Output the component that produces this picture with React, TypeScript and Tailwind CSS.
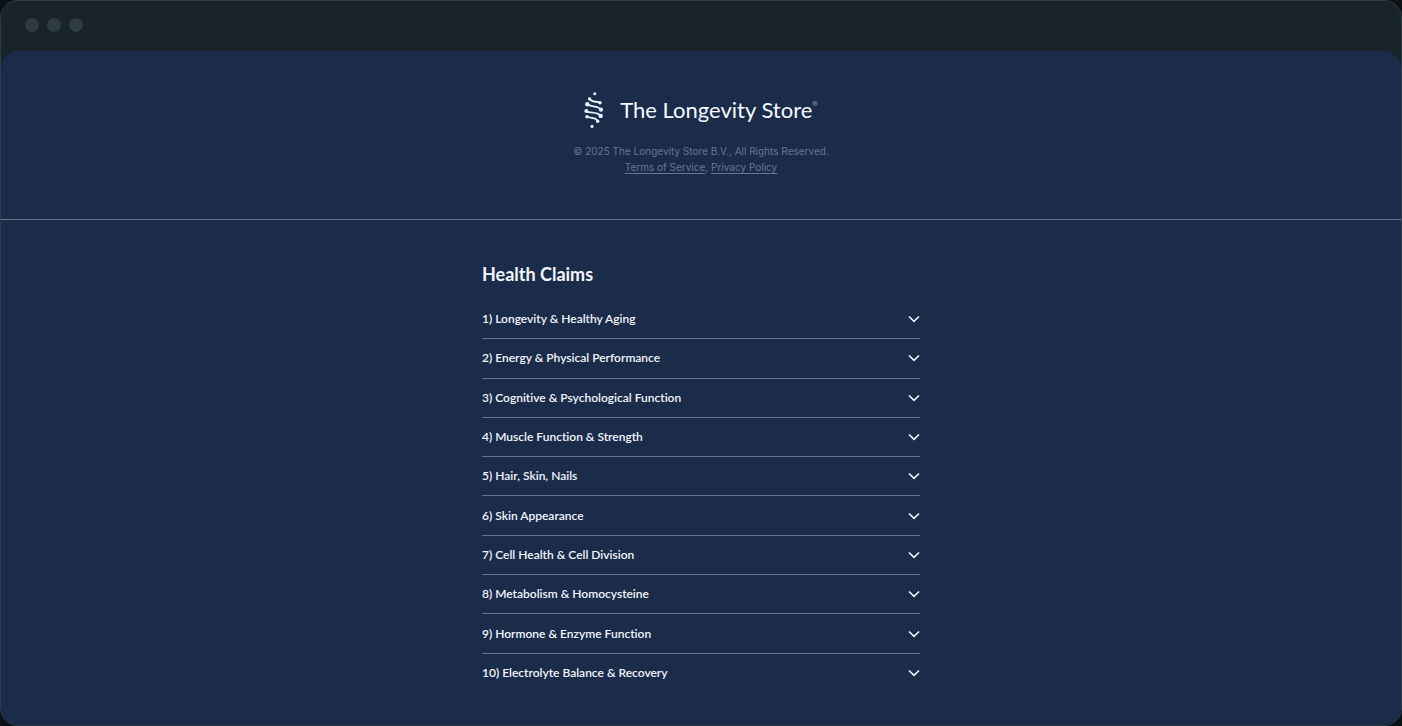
const claims = [
  'Longevity & Healthy Aging',
  'Energy & Physical Performance',
  'Cognitive & Psychological Function',
  'Muscle Function & Strength',
  'Hair, Skin, Nails',
  'Skin Appearance',
  'Cell Health & Cell Division',
  'Metabolism & Homocysteine',
  'Hormone & Enzyme Function',
  'Electrolyte Balance & Recovery'
]

function HelixMark() {
  return (
    <svg viewBox="0 0 20 38" className="h-[38px] w-5" fill="none" stroke="#e9f2fa" strokeLinecap="round" aria-hidden="true">
      <g strokeWidth="1.8">
        <path d="M5.5 7.5C7.5 11.8 11.5 10 15.7 11.5" />
        <path d="M3.3 13.3C7 16.5 13.5 14 17 18.7" />
        <path d="M2.3 20C6 23 12.5 20 16.7 24.7" />
        <path d="M3.2 26C6.5 27 12 26 13.7 30" />
      </g>
      <g fill="#e9f2fa" stroke="none">
        <circle cx="10.7" cy="2.8" r="1.5" />
        <circle cx="5.5" cy="7.8" r="1.6" />
        <circle cx="15.9" cy="11.7" r="1.8" />
        <circle cx="3.3" cy="13.3" r="2.2" />
        <circle cx="17" cy="18.7" r="2.1" />
        <circle cx="2.3" cy="20" r="2" />
        <circle cx="16.7" cy="24.9" r="2.2" />
        <circle cx="3" cy="25.8" r="1.7" />
        <circle cx="13.7" cy="30.2" r="1.7" />
        <circle cx="8" cy="35.4" r="1.6" />
      </g>
    </svg>
  )
}

function Chevron() {
  return (
    <svg viewBox="0 0 12 8" className="h-2 w-3 shrink-0" fill="none" stroke="currentColor" strokeWidth="1.6" aria-hidden="true">
      <path d="M1 1.5L6 6.3L11 1.5" />
    </svg>
  )
}

function WindowBar() {
  return (
    <div className="flex h-[50px] shrink-0 items-center gap-2 px-6 pb-0.5">
      <span className="size-3.5 rounded-full bg-[#2e3b43]" />
      <span className="size-3.5 rounded-full bg-[#2e3b43]" />
      <span className="size-3.5 rounded-full bg-[#2e3b43]" />
    </div>
  )
}

export default function App() {
  return (
    <div className="min-h-screen bg-[#0b1115] flex flex-col">
      <div className="flex grow flex-col overflow-hidden rounded-[18px] border border-[#2f3e46] bg-[#18232b]">
        <WindowBar />
        <div className="grow rounded-t-[18px] bg-[#1b2b4a]">
          {/* Brand */}
          <header className="flex flex-col items-center border-b border-[#68758f] pt-10 pb-11 font-['Inter',sans-serif]">
            <div className="flex items-center gap-4">
              <HelixMark />
              <div className="flex items-start text-[#f4faff]">
                <span className="font-['Lato',sans-serif] text-[22px] leading-8">The Longevity Store</span>
                <span className="text-[8px] leading-5 text-[#929db1]">®</span>
              </div>
            </div>
            <p className="mt-[14px] text-center text-[10px] leading-4 text-[#69768f]">
              © 2025 The Longevity Store B.V., All Rights Reserved.
              <br />
              <a href="#terms" className="underline underline-offset-2">Terms of Service</a>,{' '}
              <a href="#privacy" className="underline underline-offset-2">Privacy Policy</a>
            </p>
          </header>

          {/* Claims list */}
          <main className="mx-auto w-full max-w-[438px] pt-[42px] pb-6 font-['Lato',sans-serif] text-[#f2f6fc] [font-variant-ligatures:none]">
            <h1 className="text-lg leading-6 font-bold">Health Claims</h1>
            <ul className="mt-[14px] grid min-h-[393px] auto-rows-fr">
              {claims.map((claim, index) => (
                <li key={claim} className="flex border-b border-[#68758f] last:border-transparent">
                  <button type="button" aria-expanded="false" className="flex w-full items-center justify-between text-left text-xs font-semibold">
                    <span>{index + 1}) {claim}</span>
                    <Chevron />
                  </button>
                </li>
              ))}
            </ul>
          </main>
        </div>
      </div>
    </div>
  )
}
